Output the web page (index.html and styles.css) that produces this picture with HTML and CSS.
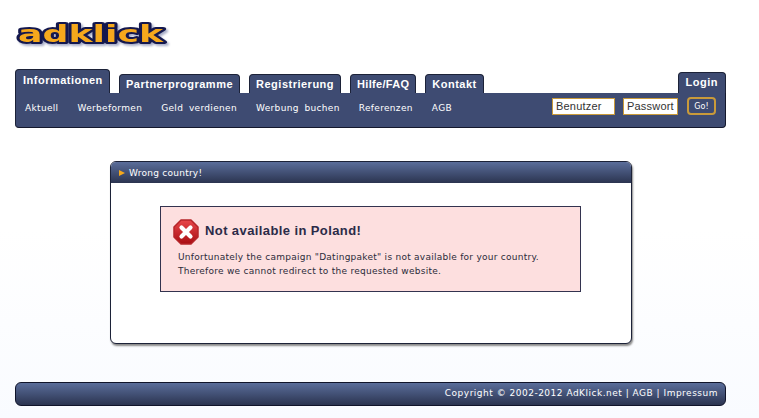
FILE: index.html
```html
<!DOCTYPE html>
<html lang="en">
<head>
  <meta charset="UTF-8">
  <title>AdKlick</title>
  <link rel="stylesheet" href="styles.css">
</head>
<body>
  <div class="page">
    <div class="logo">
      <svg width="160" height="34" viewBox="0 0 160 34">
        <text class="logo-text" x="3" y="25" textLength="145" lengthAdjust="spacingAndGlyphs">adklick</text>
      </svg>
    </div>

    <div class="tabs">
      <a class="tab tab-active">Informationen</a>
      <a class="tab">Partnerprogramme</a>
      <a class="tab">Registrierung</a>
      <a class="tab tab-help">Hilfe/FAQ</a>
      <a class="tab">Kontakt</a>
      <a class="tab tab-login">Login</a>
    </div>
    <div class="subnav">
      <a>Aktuell</a>
      <a>Werbeformen</a>
      <a>Geld verdienen</a>
      <a>Werbung buchen</a>
      <a>Referenzen</a>
      <a>AGB</a>
      <form class="login">
        <input class="login-user" type="text" value="Benutzer">
        <input class="login-pass" type="text" value="Passwort">
        <button class="login-go" type="button">Go!</button>
      </form>
    </div>

    <div class="panel">
      <div class="panel-title"><span class="arrow"></span>Wrong country!</div>
      <div class="panel-body">
        <div class="error">
          <div class="error-head">
            <svg class="error-icon" width="26" height="26" viewBox="0 0 26 26">
              <defs>
                <linearGradient id="stop" x1="0" y1="0" x2="0" y2="1">
                  <stop offset="0" stop-color="#e8474a"/>
                  <stop offset="1" stop-color="#a80d12"/>
                </linearGradient>
              </defs>
              <polygon points="8,1 18,1 25,8 25,18 18,25 8,25 1,18 1,8" fill="url(#stop)" stroke="#b5262a" stroke-linejoin="round" stroke-width="1.5"/>
              <path d="M8.5 8.5 L17.5 17.5 M17.5 8.5 L8.5 17.5" stroke="#fff" stroke-width="4.2" stroke-linecap="round"/>
            </svg>
            <h2>Not available in Poland!</h2>
          </div>
          <p>Unfortunately the campaign "Datingpaket" is not available for your country.<br>Therefore we cannot redirect to the requested website.</p>
        </div>
      </div>
    </div>

    <div class="footer">Copyright © 2002-2012 AdKlick.net | AGB | Impressum</div>
  </div>
</body>
</html>
```

FILE: styles.css
```css
html {
  height: 100%;
}
body {
  margin: 0;
  min-height: 418px;
  background: linear-gradient(#ffffff 55%, #f9fbff);
  font-family: "DejaVu Sans", Verdana, sans-serif;
  font-size: 9px;
  color: #222;
}
.page {
  width: 711px;
  margin-left: 15px;
}
.logo {
  height: 69px;
}
.logo svg {
  display: block;
  position: relative;
  top: 17px;
}
.logo-text {
  font-family: "DejaVu Sans", sans-serif;
  font-weight: bold;
  font-size: 23px;
  stroke-linejoin: round;
  fill: #f5a81c;
  stroke: #14184e;
  stroke-width: 4px;
  paint-order: stroke;
  filter: drop-shadow(2px 2px 1px #a9aec8);
}
.tabs {
  display: flex;
  align-items: flex-end;
  height: 24px;
}
.tab {
  box-sizing: border-box;
  height: 19px;
  margin-right: 9px;
  padding: 3px 6px 0;
  background: #3e4b72;
  border: 1px solid #1c2238;
  border-bottom: 0;
  border-radius: 4px 4px 0 0;
  color: #fff;
  font-family: "Liberation Sans", Arial, sans-serif;
  font-size: 11px;
  font-weight: bold;
  letter-spacing: 0.5px;
  white-space: nowrap;
}
.tab-active {
  width: 95px;
  height: 24px;
  padding: 4px 7px 0;
}
.tab-help {
  padding: 3px 6px 0;
  letter-spacing: 0.3px;
}
.tab-login {
  height: 21px;
  margin-left: auto;
  margin-right: 0;
  padding: 3px 7px 0;
}
.subnav {
  box-sizing: border-box;
  display: flex;
  align-items: center;
  gap: 19px;
  height: 35px;
  padding: 0 9px 4px 9px;
  background: #3e4b72;
  border-radius: 0 0 4px 4px;
  border-bottom: 1px solid #14182c;
  border-right: 1px solid #14182c;
  border-left: 1px solid #1c2238;
}
.subnav a {
  color: #fff;
  letter-spacing: 0.33px;
  word-spacing: 2.5px;
}
.login {
  display: flex;
  align-items: center;
  align-self: flex-start;
  margin-left: auto;
  padding-top: 4px;
}
.login input {
  box-sizing: border-box;
  height: 17px;
  padding: 0 3px;
  background: #fff;
  border: 1px solid #c99a3a;
  font-family: "Liberation Sans", Arial, sans-serif;
  font-size: 11px;
  letter-spacing: 0.2px;
  color: #333;
}
.login-user {
  width: 63px;
  margin-right: 8px;
}
.login-pass {
  width: 55px;
  margin-right: 9px;
}
.login-go {
  box-sizing: border-box;
  width: 29px;
  height: 18px;
  padding: 0;
  background: #3e4b72;
  border: 2px solid #c99a3a;
  border-radius: 4px;
  color: #fff;
  font-family: "DejaVu Sans", Verdana, sans-serif;
  font-size: 8px;
}
.panel {
  box-sizing: border-box;
  width: 522px;
  height: 183px;
  margin: 33px 0 38px 95px;
  background: #fff;
  border: 1px solid #1c2238;
  border-radius: 6px;
  box-shadow: 1px 2px 2px #888;
}
.panel-title {
  display: flex;
  align-items: center;
  height: 21px;
  padding-left: 8px;
  background: linear-gradient(#5a6d9a, #2b3450);
  border-radius: 5px 5px 0 0;
  color: #fff;
  letter-spacing: 0.25px;
}
.arrow {
  width: 0;
  height: 0;
  margin-right: 4px;
  border-left: 6px solid #f5a81c;
  border-top: 3px solid transparent;
  border-bottom: 3px solid transparent;
}
.panel-body {
  padding: 23px 50px 0 49px;
}
.error {
  box-sizing: border-box;
  height: 86px;
  padding: 12px 17px 0 12px;
  background: #fddfdf;
  border: 1px solid #33334f;
}
.error-head {
  display: flex;
  align-items: center;
  gap: 6px;
}
.error h2 {
  margin: 0;
  padding-bottom: 4px;
  font-family: "Liberation Sans", Arial, sans-serif;
  font-size: 13px;
  color: #2b2b48;
  letter-spacing: 0.4px;
}
.error p {
  margin: 5px 0 0 5px;
  font-size: 9px;
  line-height: 14px;
  letter-spacing: 0.26px;
  color: #2b2b3a;
}
.footer {
  box-sizing: border-box;
  height: 24px;
  padding: 5px 7px 0 0;
  background: linear-gradient(#5a6d9a, #2b3450);
  border: 1px solid #10142a;
  border-radius: 6px;
  color: #fff;
  text-align: right;
  letter-spacing: 0.5px;
}
```
